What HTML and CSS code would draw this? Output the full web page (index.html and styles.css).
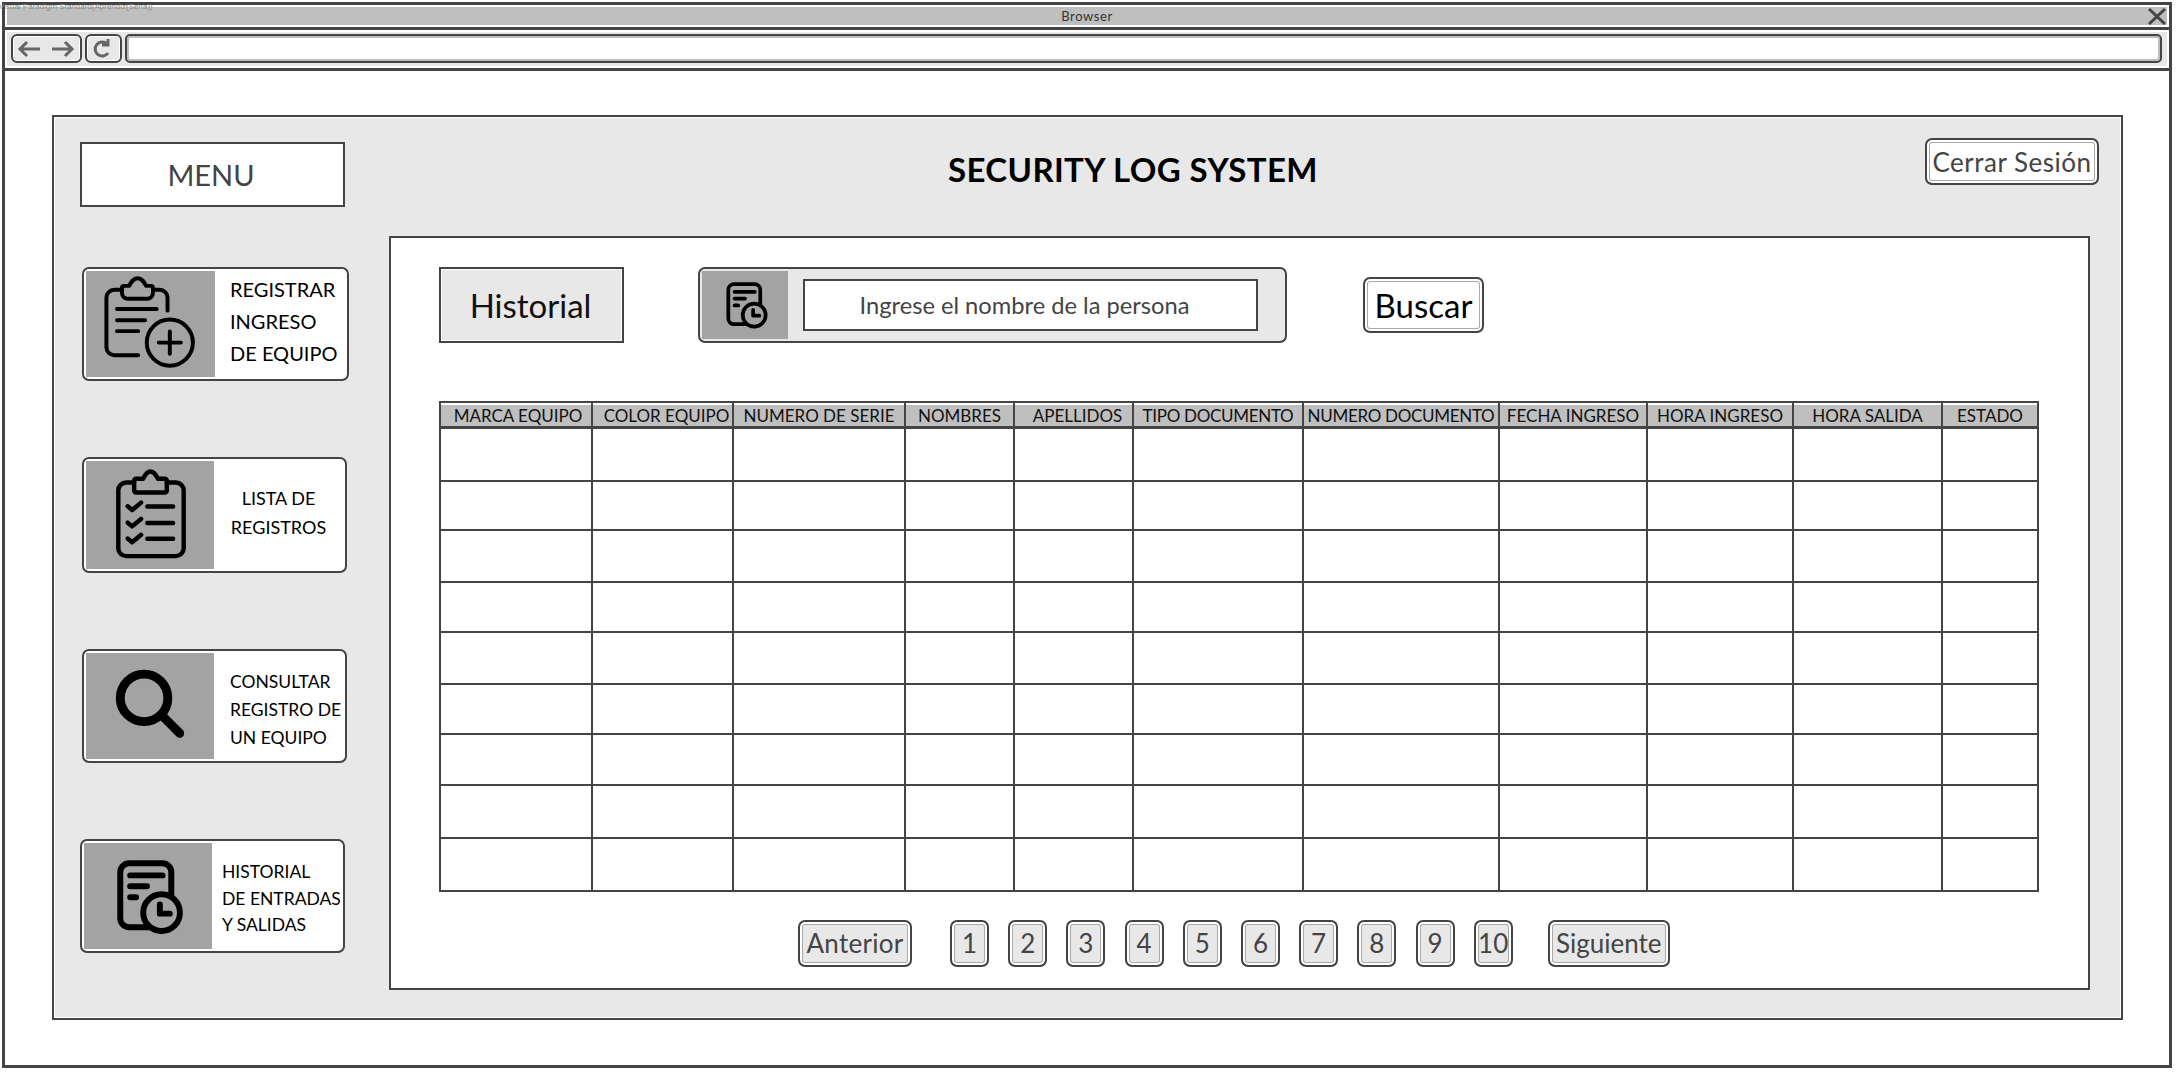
FILE: index.html
```html
<!DOCTYPE html>
<html lang="en">
<head>
    <meta charset="UTF-8">
    <title>Security Log System</title>
    <link rel="stylesheet" href="styles.css">
</head>
<body>
    <div class="watermark">Visual Paradigm Standard(Aprendiz(Sena))</div>

    <div class="window">
        <div class="titlebar">
            <span></span>
            <span class="titlebar-text">Browser</span>
            <svg class="close-icon" viewBox="0 0 18 17"><path d="M1 1 L17 16 M17 1 L1 16"/></svg>
        </div>

        <div class="toolbar">
            <div class="tool-btn nav-btn">
                <svg width="67" height="25" viewBox="0 0 67 25"><path d="M27 13 H7 M14 6 L7 13 L14 20 M39 13 H59 M52 6 L59 13 L52 20"/></svg>
            </div>
            <div class="tool-btn reload-btn">
                <svg width="33" height="25" viewBox="0 0 33 25"><path d="M21 17 A7 7 0 1 1 20 8 M21 3 V9 H15"/></svg>
            </div>
            <div class="address"></div>
        </div>

        <div class="content">
            <div class="panel">
                <!-- Left menu -->
                <div class="sidebar">
                    <div class="menu-title">MENU</div>
                    <div class="cards">
                        <div class="card card-one">
                            <div class="card-icon">
                                <svg viewBox="0 0 129 107"><path class="line" d="M81.7 40 V27 a8 8 0 0 0 -8 -8 H67 M36 19 H28 a8 8 0 0 0 -8 8 V77 a8 8 0 0 0 8 8 H52"/><path class="line" d="M35.7 17 V22 a6 6 0 0 0 6 6 H61 a6 6 0 0 0 6 -6 V17 a2 2 0 0 0 -2 -2 H60 C58 11 56 7.3 51.5 7.3 C47 7.3 45 11 43 15 H37.7 a2 2 0 0 0 -2 2 Z"/><path class="line" d="M30.7 38.3 H70.7 M30.7 49.7 H59 M30.7 60.7 H52"/><circle class="line" cx="84" cy="72.3" r="23.3"/><path class="line" d="M84 61 V83.5 M72.8 72.3 H95.2"/></svg>
                            </div>
                            <div class="card-text text-reg">REGISTRAR<br>INGRESO<br>DE EQUIPO</div>
                        </div>
                        <div class="card card-two">
                            <div class="card-icon">
                                <svg viewBox="0 0 128 109"><path class="line bold" d="M48 21.7 H40 a8 8 0 0 0 -8 8 V88 a8 8 0 0 0 8 8 H90 a8 8 0 0 0 8 -8 V29.7 a8 8 0 0 0 -8 -8 H81"/><path class="line bold" d="M48 20 V29.7 a2 2 0 0 0 2 2 H79 a2 2 0 0 0 2 -2 V20 a2 2 0 0 0 -2 -2 H72 C70 14 68 10.7 64.5 10.7 C61 10.7 59 14 57 18 H50 a2 2 0 0 0 -2 2 Z"/><path class="line bold" d="M41.5 45.7 L46 49.5 L55 42 M41.5 62.3 L46 66 L55 58.5 M41.5 78.3 L46 82 L55 74.5"/><path class="line bold" d="M61.3 46 H87.3 M61.3 62.5 H87.3 M61.3 78.5 H87.3"/></svg>
                            </div>
                            <div class="card-text text-list">LISTA DE<br>REGISTROS</div>
                        </div>
                        <div class="card card-three">
                            <div class="card-icon">
                                <svg viewBox="0 0 128 107"><circle class="line thick" cx="58" cy="45.3" r="24"/><path class="line thick" d="M77 64 L94 81"/></svg>
                            </div>
                            <div class="card-text text-search">CONSULTAR<br>REGISTRO DE<br>UN EQUIPO</div>
                        </div>
                        <div class="card card-four">
                            <div class="card-icon">
                                <svg viewBox="0 0 128 107"><rect class="line wide" x="36" y="20.5" width="51.5" height="64.5" rx="9"/><path class="line wide" d="M46 32.7 H78.7 M46 43.7 H63 M46 54.7 H52"/><circle class="line wide clock" cx="77.7" cy="70.3" r="18.5"/><path class="line wide" d="M76 62 V71.3 H86"/></svg>
                            </div>
                            <div class="card-text text-hist">HISTORIAL<br>DE ENTRADAS<br>Y SALIDAS</div>
                        </div>
                    </div>
                </div>

                <!-- Right side -->
                <div class="main">
                    <div class="head">
                        <h1 class="app-title">SECURITY LOG SYSTEM</h1>
                        <div class="btn logout">Cerrar Sesión</div>
                    </div>

                    <div class="sheet">
                        <div class="search-row">
                            <div class="section-label">Historial</div>
                            <div class="search-group">
                                <div class="search-icon">
                                    <svg width="86" height="69" viewBox="0 0 86 69"><g transform="translate(4 0.5) scale(0.62)"><rect class="line wide" x="36" y="20.5" width="51.5" height="64.5" rx="9"/><path class="line wide" d="M46 32.7 H78.7 M46 43.7 H63 M46 54.7 H52"/><circle class="line wide clock" cx="77.7" cy="70.3" r="18.5"/><path class="line wide" d="M76 62 V71.3 H86"/></g></svg>
                                </div>
                                <div class="search-input">Ingrese el nombre de la persona</div>
                            </div>
                            <div class="btn search-btn">Buscar</div>
                        </div>

                        <table class="log-table">
                            <colgroup>
                                <col class="c1"><col class="c2"><col class="c3"><col class="c4"><col class="c5"><col class="c6"><col class="c7"><col class="c8"><col class="c9"><col class="c10"><col class="c11">
                            </colgroup>
                            <thead>
                                <tr>
                                    <th class="nudge">MARCA EQUIPO</th>
                                    <th class="shift">COLOR EQUIPO</th>
                                    <th>NUMERO DE SERIE</th>
                                    <th>NOMBRES</th>
                                    <th class="shift">APELLIDOS</th>
                                    <th class="tight">TIPO DOCUMENTO</th>
                                    <th class="tight">NUMERO DOCUMENTO</th>
                                    <th>FECHA INGRESO</th>
                                    <th>HORA INGRESO</th>
                                    <th>HORA SALIDA</th>
                                    <th>ESTADO</th>
                                </tr>
                            </thead>
                            <tbody>
                                <tr><td></td><td></td><td></td><td></td><td></td><td></td><td></td><td></td><td></td><td></td><td></td></tr>
                                <tr><td></td><td></td><td></td><td></td><td></td><td></td><td></td><td></td><td></td><td></td><td></td></tr>
                                <tr><td></td><td></td><td></td><td></td><td></td><td></td><td></td><td></td><td></td><td></td><td></td></tr>
                                <tr><td></td><td></td><td></td><td></td><td></td><td></td><td></td><td></td><td></td><td></td><td></td></tr>
                                <tr><td></td><td></td><td></td><td></td><td></td><td></td><td></td><td></td><td></td><td></td><td></td></tr>
                                <tr><td></td><td></td><td></td><td></td><td></td><td></td><td></td><td></td><td></td><td></td><td></td></tr>
                                <tr><td></td><td></td><td></td><td></td><td></td><td></td><td></td><td></td><td></td><td></td><td></td></tr>
                                <tr><td></td><td></td><td></td><td></td><td></td><td></td><td></td><td></td><td></td><td></td><td></td></tr>
                                <tr><td></td><td></td><td></td><td></td><td></td><td></td><td></td><td></td><td></td><td></td><td></td></tr>
                            </tbody>
                        </table>

                        <div class="pager">
                            <div class="btn page-btn prev">Anterior</div>
                            <div class="page-numbers">
                                <div class="btn page-btn num">1</div>
                                <div class="btn page-btn num">2</div>
                                <div class="btn page-btn num">3</div>
                                <div class="btn page-btn num">4</div>
                                <div class="btn page-btn num">5</div>
                                <div class="btn page-btn num">6</div>
                                <div class="btn page-btn num">7</div>
                                <div class="btn page-btn num">8</div>
                                <div class="btn page-btn num">9</div>
                                <div class="btn page-btn num">10</div>
                            </div>
                            <div class="btn page-btn next">Siguiente</div>
                        </div>
                    </div>
                </div>
            </div>
        </div>
    </div>
</body>
</html>
```

FILE: styles.css
```css
/* Reset */
* {
    box-sizing: border-box;
}

html, body {
    margin: 0;
    padding: 0;
    height: 100%;
    overflow: hidden;
    background-color: #fff;
}

body {
    padding: 2px 4px 4px 2px;
    font-family: "Lato", "Noto Sans", sans-serif;
    color: #444;
    position: relative;
}

/* Export watermark in the top corner */
.watermark {
    position: absolute;
    top: 2px;
    left: -1px;
    font-family: "Liberation Sans", sans-serif;
    font-size: 8px;
    color: #8a8a8a;
    white-space: nowrap;
    z-index: 2;
}

/* Browser frame */
.window {
    height: 100%;
    border: 3px solid #444;
    display: flex;
    flex-direction: column;
}

.titlebar {
    height: 25px;
    margin: 0;
    padding: 2px;
    border-bottom: 3px solid #444;
    display: grid;
    grid-template-columns: 1fr auto 1fr;
    align-items: center;
    background: #bfbfbf content-box;
}

.titlebar-text {
    font-size: 13px;
    letter-spacing: 0.6px;
    color: #333;
}

.close-icon {
    justify-self: end;
    width: 18px;
    height: 17px;
    margin-right: 1px;
    fill: none;
    stroke: #444;
    stroke-width: 3;
}

.toolbar {
    height: 41px;
    border-bottom: 3px solid #444;
    padding: 2px 2px 2px 2px;
    display: flex;
    align-items: flex-start;
    gap: 3px;
    background: #e8e8e8 content-box;
}

.tool-btn {
    height: 29px;
    margin-top: 2px;
    border: 2px solid #444;
    border-radius: 6px;
    background-color: #e8e8e8;
    box-shadow: inset 0 0 0 1px #fff;
}

.tool-btn svg {
    display: block;
    fill: none;
    stroke: #666;
    stroke-width: 3;
}

.nav-btn {
    width: 71px;
    margin-left: 4px;
}

.reload-btn {
    width: 37px;
}

.address {
    flex: 1;
    height: 29px;
    margin-top: 2px;
    margin-right: 5px;
    border: 2px solid #444;
    border-radius: 5px;
    background-color: #fff;
    box-shadow: inset 0 0 0 2px #bdbdbd;
}

.content {
    flex: 1;
    padding: 44px 46px 45px 47px;
}

/* Grey panel */
.panel {
    height: 100%;
    border: 2px solid #444;
    background-color: #e8e8e8;
    box-shadow: inset 0 0 0 1px #fff;
    padding: 21px 22px 28px 26px;
    display: flex;
    gap: 40px;
}

.sidebar {
    width: 269px;
    flex: none;
    padding-top: 4px;
}

.menu-title {
    width: 265px;
    height: 65px;
    padding-right: 3px;
    border: 2px solid #444;
    background-color: #fff;
    display: flex;
    align-items: center;
    justify-content: center;
    font-size: 29px;
}

.cards {
    margin-top: 60px;
    display: flex;
    flex-direction: column;
    gap: 76px;
}

.card {
    height: 114px;
    border: 2px solid #444;
    border-radius: 7px;
    background-color: #fff;
    padding: 2px;
    display: flex;
    color: #000;
}

.card-one {
    width: 267px;
    margin-left: 2px;
}

.card-two {
    width: 265px;
    height: 116px;
    margin-left: 2px;
}

.card-three {
    width: 265px;
    margin-left: 2px;
}

.card-four {
    width: 265px;
}

.card-icon {
    width: 128px;
    flex: none;
    background-color: #a3a3a3;
}

.card-one .card-icon {
    width: 129px;
}

.card-icon svg {
    display: block;
    width: 100%;
    height: 100%;
}

.line {
    fill: none;
    stroke: #000;
    stroke-width: 4;
    stroke-linecap: round;
    stroke-linejoin: round;
}

.line.bold {
    stroke-width: 4.5;
}

.line.thick {
    stroke-width: 9;
}

.line.wide {
    stroke-width: 6;
}

.line.clock {
    fill: #a3a3a3;
}

.card-text {
    flex: 1;
    align-self: center;
    white-space: nowrap;
}

.text-reg {
    padding-left: 15px;
    font-size: 20px;
    line-height: 32px;
    margin-bottom: 6px;
}

.text-list {
    font-size: 18px;
    line-height: 29px;
    text-align: center;
    margin-bottom: 5px;
}

.text-search {
    padding-left: 16px;
    font-size: 17.5px;
    line-height: 28px;
    margin-top: 7px;
}

.text-hist {
    padding-left: 10px;
    font-size: 17.5px;
    line-height: 26.5px;
    margin-top: 6px;
}

/* Right side */
.main {
    flex: 1;
    display: flex;
    flex-direction: column;
}

.head {
    height: 98px;
    padding-left: 559px;
    display: flex;
    justify-content: space-between;
    align-items: flex-start;
}

.app-title {
    margin: 13px 0 0;
    font-size: 33px;
    line-height: 36px;
    font-weight: 700;
    letter-spacing: 0.37px;
    color: #000;
}

.btn {
    border: 2px solid #444;
    border-radius: 7px;
    background-color: #fff;
    box-shadow: inset 0 0 0 2px #fff, inset 0 0 0 3px #aaa;
    display: flex;
    align-items: center;
    justify-content: center;
}

.logout {
    width: 174px;
    height: 47px;
    font-size: 26px;
    letter-spacing: 0.5px;
}

.sheet {
    flex: 1;
    margin-right: 9px;
    border: 2px solid #444;
    background-color: #fff;
    padding: 29px 48px 0;
}

.search-row {
    height: 76px;
    display: flex;
    align-items: center;
}

.section-label {
    width: 185px;
    height: 76px;
    padding-right: 2px;
    border: 2px solid #444;
    background-color: #e8e8e8;
    box-shadow: inset 0 0 0 1px #fff;
    display: flex;
    align-items: center;
    justify-content: center;
    font-size: 33px;
    color: #111;
}

.search-group {
    width: 589px;
    height: 76px;
    margin-left: 74px;
    border: 2px solid #444;
    border-radius: 7px;
    background-color: #e8e8e8;
    padding: 2px;
    display: flex;
    align-items: center;
}

.search-icon {
    width: 86px;
    height: 100%;
    flex: none;
    background-color: #a3a3a3;
}

.search-icon svg {
    display: block;
}

.search-input {
    width: 455px;
    height: 52px;
    margin-left: 15px;
    padding-right: 12px;
    border: 2px solid #444;
    background-color: #fff;
    display: flex;
    align-items: center;
    justify-content: center;
    font-size: 23.7px;
}

.search-btn {
    width: 121px;
    height: 56px;
    margin-left: 76px;
    font-size: 33px;
    color: #000;
}

/* Table */
.log-table {
    margin-top: 58px;
    width: 1598px;
    border-collapse: collapse;
    table-layout: fixed;
    border: 2px solid #444;
}

.c1 { width: 152px; }
.c2 { width: 141px; }
.c3 { width: 172px; }
.c4 { width: 109px; }
.c5 { width: 119px; }
.c6 { width: 170px; }
.c7 { width: 196px; }
.c8 { width: 148px; }
.c9 { width: 146px; }
.c10 { width: 149px; }
.c11 { width: 96px; }

.log-table th {
    height: 25px;
    padding: 2px 0 0;
    border: 2px solid #444;
    border-bottom-width: 3px;
    background-color: #bfbfbf;
    box-shadow: inset 0 2px 0 #fff;
    font-size: 17px;
    font-weight: 400;
    color: #111;
    white-space: nowrap;
}

.log-table th.shift {
    padding-left: 8px;
}

.log-table th.nudge {
    padding-left: 4px;
}

.log-table th.tight {
    letter-spacing: -0.3px;
}

.log-table td {
    padding: 0;
    border: 2px solid #444;
}

.log-table tbody tr:nth-child(1) { height: 53px; }
.log-table tbody tr:nth-child(2) { height: 49px; }
.log-table tbody tr:nth-child(3) { height: 52px; }
.log-table tbody tr:nth-child(4) { height: 50px; }
.log-table tbody tr:nth-child(5) { height: 52px; }
.log-table tbody tr:nth-child(6) { height: 50px; }
.log-table tbody tr:nth-child(7) { height: 51px; }
.log-table tbody tr:nth-child(8) { height: 53px; }
.log-table tbody tr:nth-child(9) { height: 53px; }

/* Pagination */
.pager {
    margin-top: 28px;
    padding-left: 359px;
    display: flex;
}

.page-numbers {
    margin: 0 35px 0 38px;
    display: flex;
    gap: 19.2px;
}

.page-btn {
    height: 47px;
    background-color: #e8e8e8;
    font-size: 26px;
}

.prev {
    width: 114px;
    letter-spacing: 0.3px;
}

.num {
    width: 39px;
}

.next {
    width: 122px;
}
```
